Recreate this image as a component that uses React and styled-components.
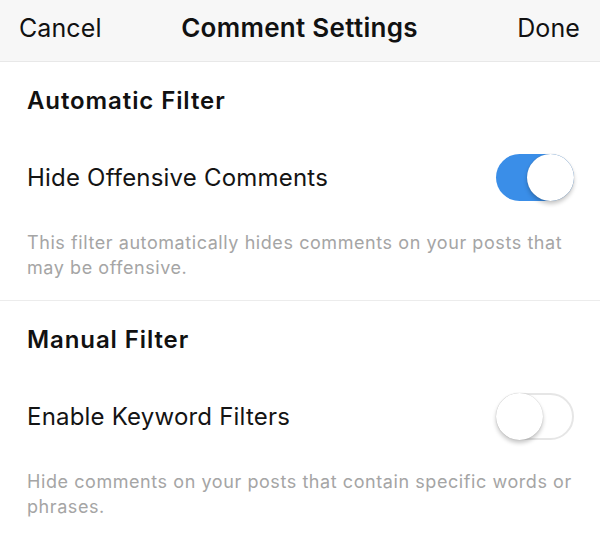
import React, { useState } from 'react';
import styled, { createGlobalStyle } from 'styled-components';

const GlobalStyle = createGlobalStyle`
  html, body {
    margin: 0;
    padding: 0;
    background: #ffffff;
  }
  body {
    font-family: Inter, "Noto Sans", "Liberation Sans", sans-serif;
    -webkit-font-smoothing: antialiased;
  }
`;

const Screen = styled.div`
  width: 600px;
  height: 539px;
  overflow: hidden;
  background: #ffffff;
  display: flex;
  flex-direction: column;
`;

const NavBar = styled.header`
  height: 62px;
  flex-shrink: 0;
  background: #f7f7f7;
  border-bottom: 1px solid #e8e8e8;
  display: grid;
  grid-template-columns: 1fr auto 1fr;
  align-items: center;
  padding: 0 20px 6px 19px;
  box-sizing: border-box;
`;

const NavButton = styled.button`
  border: 0;
  background: none;
  padding: 0;
  font-family: inherit;
  font-size: 25px;
  font-weight: 400;
  color: #111111;
  letter-spacing: 0.1px;
  justify-self: ${({ $end }) => ($end ? 'end' : 'start')};
`;

const NavTitle = styled.h1`
  margin: 0;
  font-size: 26px;
  font-weight: 600;
  color: #111111;
  letter-spacing: 0.3px;
`;

const Section = styled.section`
  padding: 0 27px ${({ $divider }) => ($divider ? '20px' : '0')};
  border-bottom: ${({ $divider }) => ($divider ? '1px solid #ececec' : '0')};
`;

const SectionTitle = styled.h2`
  margin: 0;
  padding-top: 24px;
  font-size: 24px;
  font-weight: 600;
  color: #111111;
  line-height: 30px;
  letter-spacing: 0.9px;
`;

const Row = styled.div`
  display: flex;
  align-items: center;
  justify-content: space-between;
  margin-top: 38px;
  height: 47px;
`;

const RowLabel = styled.span`
  font-size: 24px;
  color: #141414;
  letter-spacing: 0.2px;
`;

const Track = styled.button`
  position: relative;
  width: 78px;
  height: 47px;
  margin-right: -1px;
  padding: 0;
  border-radius: 24px;
  cursor: pointer;
  background: ${({ $on }) => ($on ? '#3a8ee8' : '#ffffff')};
  border: ${({ $on }) => ($on ? '0' : '2px solid #e6e6e6')};
  box-sizing: border-box;
`;

const Knob = styled.span`
  position: absolute;
  top: ${({ $on }) => ($on ? '0' : '-2px')};
  left: ${({ $on }) => ($on ? '31px' : '-2px')};
  width: 47px;
  height: 47px;
  border-radius: 50%;
  background: #ffffff;
  box-shadow: 0 3px 4px rgba(0, 0, 0, 0.22), 0 0 1px rgba(0, 0, 0, 0.25);
`;

const Note = styled.p`
  margin: 0;
  padding-top: 29px;
  font-size: 18px;
  line-height: 25px;
  color: #a5a5a5;
  letter-spacing: 0.57px;
`;

const Toggle = ({ on, onChange }) => (
  <Track $on={on} onClick={() => onChange(!on)} aria-pressed={on}>
    <Knob $on={on} />
  </Track>
);

export default function App() {
  const [hideOffensive, setHideOffensive] = useState(true);
  const [keywords, setKeywords] = useState(false);

  return (
    <>
      <GlobalStyle />
      <Screen>
        <NavBar>
          <NavButton>Cancel</NavButton>
          <NavTitle>Comment Settings</NavTitle>
          <NavButton $end>Done</NavButton>
        </NavBar>

        <Section $divider>
          <SectionTitle>Automatic Filter</SectionTitle>
          <Row>
            <RowLabel>Hide Offensive Comments</RowLabel>
            <Toggle on={hideOffensive} onChange={setHideOffensive} />
          </Row>
          <Note>
            This filter automatically hides comments on your posts that may be
            offensive.
          </Note>
        </Section>

        <Section>
          <SectionTitle>Manual Filter</SectionTitle>
          <Row>
            <RowLabel>Enable Keyword Filters</RowLabel>
            <Toggle on={keywords} onChange={setKeywords} />
          </Row>
          <Note>
            Hide comments on your posts that contain specific words or phrases.
          </Note>
        </Section>
      </Screen>
    </>
  );
}
